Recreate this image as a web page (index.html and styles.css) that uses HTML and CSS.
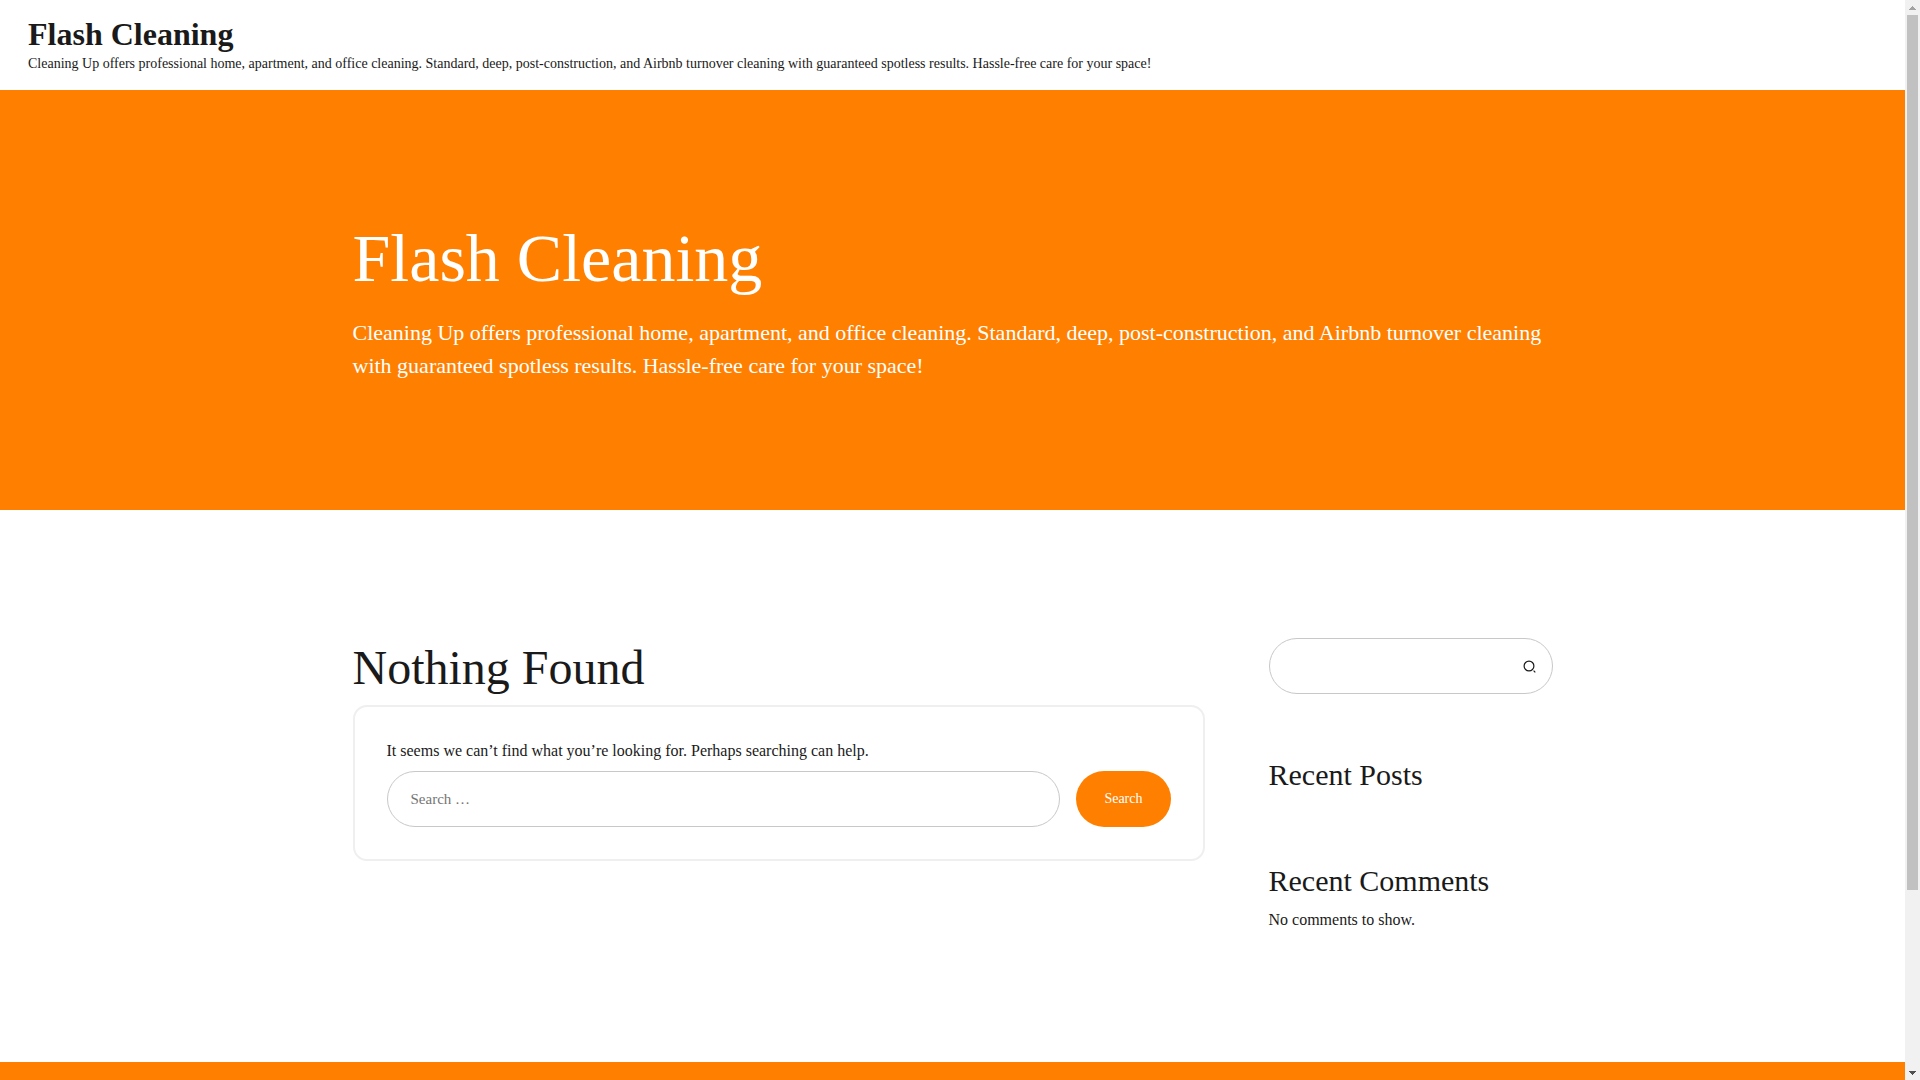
FILE: index.html
```html
<!DOCTYPE html>
<html lang="en">
<head>
<meta charset="utf-8">
<meta name="viewport" content="width=device-width, initial-scale=1">
<title>Flash Cleaning</title>
<link rel="stylesheet" href="styles.css">
</head>
<body>
<div class="viewport">
  <div class="page">
    <header class="site-header">
      <a class="site-title" href="#">Flash Cleaning</a>
      <p class="site-tagline">Cleaning Up offers professional home, apartment, and office cleaning. Standard, deep, post-construction, and Airbnb turnover cleaning with guaranteed spotless results. Hassle-free care for your space!</p>
    </header>
    <section class="hero">
      <div class="container">
        <h1 class="hero-title">Flash Cleaning</h1>
        <p class="hero-text">Cleaning Up offers professional home, apartment, and office cleaning. Standard, deep, post-construction, and Airbnb turnover cleaning with guaranteed spotless results. Hassle-free care for your space!</p>
      </div>
    </section>
    <div class="container content">
      <main class="main">
        <h2 class="page-title">Nothing Found</h2>
        <div class="card">
          <p class="text">It seems we can’t find what you’re looking for. Perhaps searching can help.</p>
          <form class="search-form">
            <input class="field" type="search" placeholder="Search …" aria-label="Search for">
            <button class="search-button" type="submit">Search</button>
          </form>
        </div>
      </main>
      <aside class="sidebar">
        <form class="widget-search">
          <input class="widget-input" type="search" aria-label="Search">
          <button class="icon-button" type="submit" aria-label="Search">
            <svg width="13" height="13" viewBox="0 0 13 13" fill="none" stroke="currentColor"><circle cx="6" cy="6" r="4.9" stroke-width="1.2"/><path d="M10.6 10.6l1.7 1.7" stroke-width="1.2"/></svg>
          </button>
        </form>
        <section class="widget">
          <h2 class="widget-title">Recent Posts</h2>
        </section>
        <section class="widget">
          <h2 class="widget-title">Recent Comments</h2>
          <p class="widget-text">No comments to show.</p>
        </section>
      </aside>
    </div>
    <footer class="site-footer"></footer>
  </div>
  <div class="scrollbar" aria-hidden="true">
    <svg class="arrow arrow-up" width="7" height="4" viewBox="0 0 7 4" shape-rendering="crispEdges"><path d="M3 0h1v1h1v1h1v1h1v1H0V3h1V2h1V1h1z" fill="currentColor"/></svg>
    <div class="track"><div class="thumb"></div><div class="rest"></div></div>
    <svg class="arrow" width="7" height="4" viewBox="0 0 7 4" shape-rendering="crispEdges"><path d="M0 0h7v1H6v1H5v1H4v1H3V3H2V2H1V1H0z" fill="currentColor"/></svg>
  </div>
</div>
</body>
</html>
```

FILE: styles.css
```css
* { box-sizing: border-box; }

body {
  margin: 0;
  background: #fff;
  color: #1a1a1a;
  font-family: "Liberation Serif", "Times New Roman", serif;
  font-size: 16px;
  line-height: 24px;
}

h1, h2, p { margin: 0; font-weight: 400; }

button, input { font-family: inherit; color: inherit; }

.viewport {
  display: grid;
  grid-template-columns: minmax(0, 1fr) 15px;
  height: 100vh;
  overflow: hidden;
}

.page { overflow: hidden; }

.container {
  width: 100%;
  max-width: 1200px;
  margin: 0 auto;
}

.site-header { padding: 14px 28px 16px; }

.site-title {
  display: block;
  color: inherit;
  font-size: 32px;
  font-weight: 700;
  line-height: 40px;
  text-decoration: none;
}

.site-tagline { font-size: 14px; line-height: 20px; }

.hero {
  padding: 128px 0;
  background: #ff8000;
  color: #fff;
}

.hero-title {
  margin-bottom: 18px;
  font-size: 68px;
  line-height: 80px;
}

.hero-text { font-size: 22px; line-height: 33px; }

.content {
  display: grid;
  grid-template-columns: 3fr 1fr;
  gap: 64px;
  align-items: start;
  padding: 128px 0;
}

.page-title {
  margin-bottom: 8px;
  font-size: 48px;
  line-height: 59px;
}

.card {
  padding: 32px;
  border: 2px solid #efefef;
  border-radius: 14px;
}

.search-form { display: flex; gap: 16px; margin-top: 8px; }

.field {
  flex: 1;
  min-width: 0;
  height: 56px;
  margin: 0;
  padding: 0 23px;
  border: 1px solid #c8c8c8;
  border-radius: 28px;
  background: #fff;
  font-size: 15px;
  outline: none;
  appearance: none;
}

.field::placeholder { color: #757575; }

.search-button {
  height: 56px;
  padding: 0 28px;
  border: 0;
  border-radius: 28px;
  background: #ff8000;
  color: #fff;
  font-size: 14px;
}

.sidebar { display: grid; gap: 62px; }

.widget-search {
  display: flex;
  align-items: center;
  height: 56px;
  padding: 0 8px 0 24px;
  border: 1px solid #c8c8c8;
  border-radius: 28px;
}

.widget-input {
  flex: 1;
  min-width: 0;
  height: 40px;
  padding: 0;
  border: 0;
  background: none;
  font-size: 15px;
  outline: none;
  appearance: none;
}

.icon-button {
  display: grid;
  place-items: center;
  width: 28px;
  height: 28px;
  padding: 0;
  border: 0;
  background: none;
}

.widget-title { margin-bottom: 6px; font-size: 30px; line-height: 38px; }

.widget-text { line-height: 28px; }

.site-footer { height: 320px; background: #ff8000; }

.scrollbar {
  display: flex;
  flex-direction: column;
  align-items: center;
  justify-content: space-between;
  padding: 6px 2px 5px;
  background: #f1f1f1;
  color: #505050;
}

.arrow { display: block; }

.arrow-up { color: #a3a3a3; }

.track {
  flex: 1;
  display: flex;
  flex-direction: column;
  align-self: stretch;
  padding: 5px 0 6px;
}

.thumb { flex: 5; background: #c1c1c1; }

.rest { flex: 1; }
```
